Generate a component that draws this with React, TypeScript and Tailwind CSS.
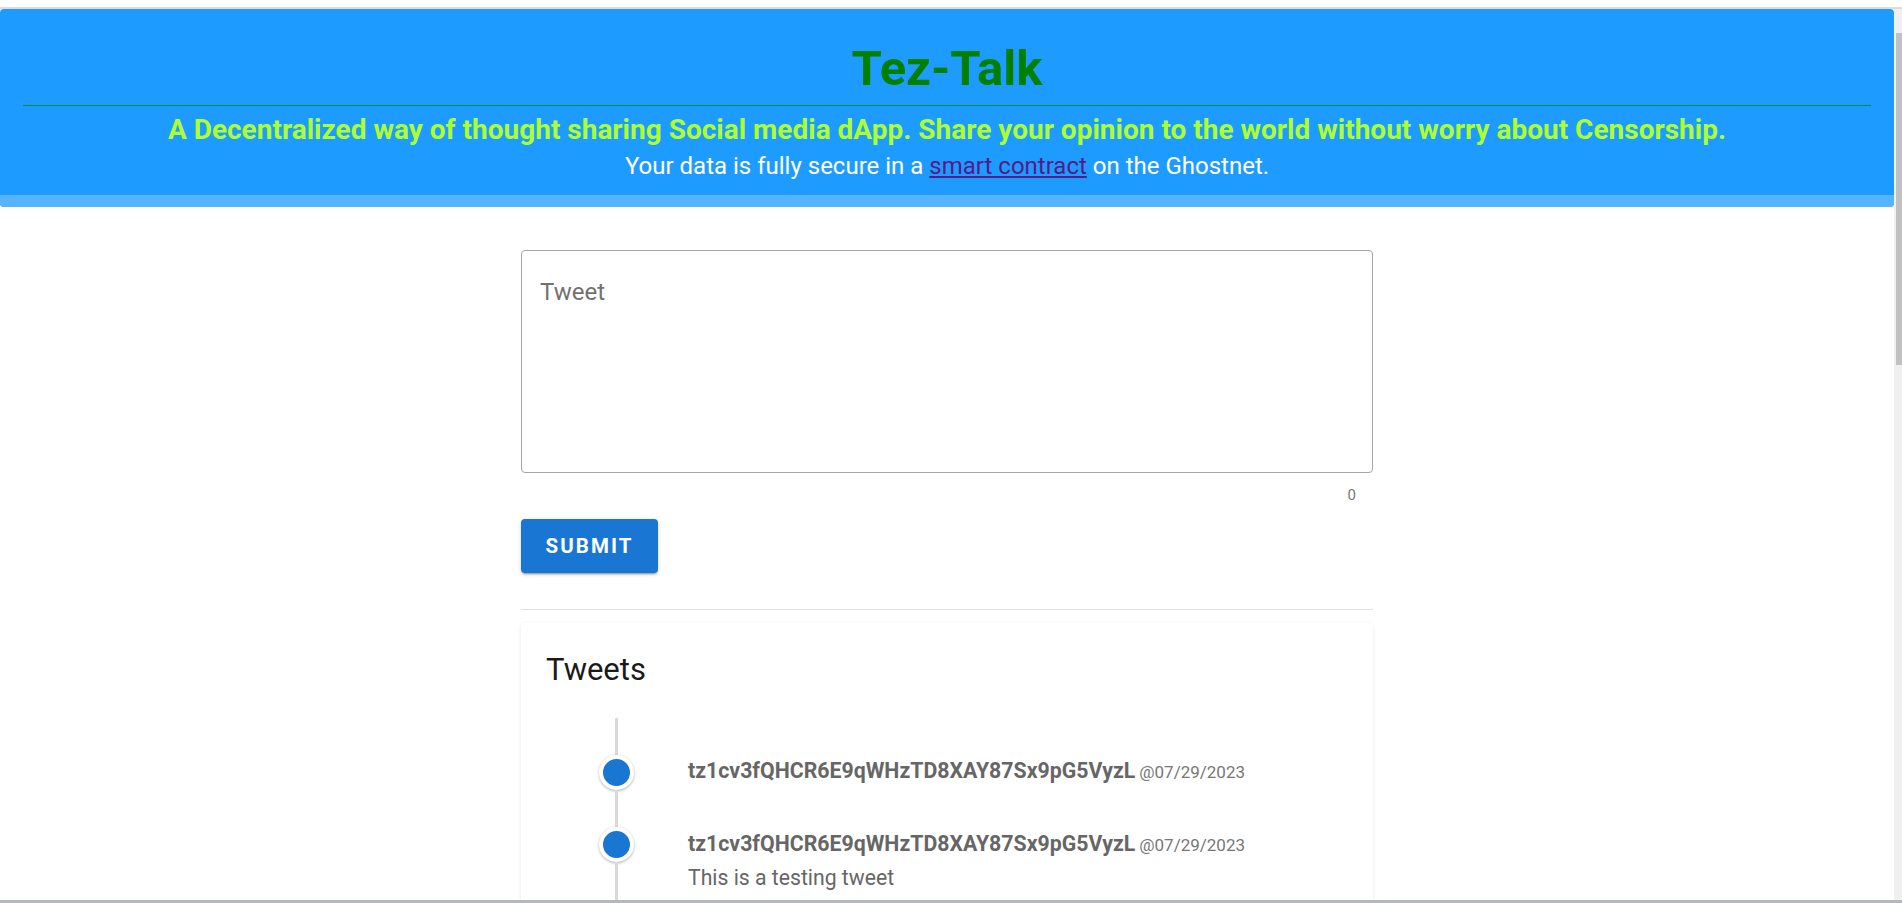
import React from "react";

const tweets = [
  { addr: "tz1cv3fQHCR6E9qWHzTD8XAY87Sx9pG5VyzL", date: "@07/29/2023", body: "" },
  { addr: "tz1cv3fQHCR6E9qWHzTD8XAY87Sx9pG5VyzL", date: "@07/29/2023", body: "This is a testing tweet" },
];

export default function App() {
  return (
    <div className="flex h-[903px] w-full flex-col overflow-hidden bg-white font-['Roboto',sans-serif]">
      <div className="flex min-h-0 flex-1">
        <div className="flex min-w-0 flex-1 flex-col">
          <div className="h-[7px] shrink-0 bg-white" />
          <div className="h-[2px] shrink-0 bg-[#dcdcdc]" />
          <header className="shrink-0 overflow-hidden rounded-[4px] bg-[#1e9bff]">
            <div className="px-[23px] pt-[35px] pb-[14px]">
              <h1 className="text-center text-[49px] font-bold leading-[49px] text-[#008000]">Tez-Talk</h1>
              <hr className="mt-[12px] border-0 border-t border-[#0a8a3a]" />
              <h3 className="mt-[7px] text-center text-[28px] font-bold leading-[34px] text-[#adff2f]">
                A Decentralized way of thought sharing Social media dApp. Share your opinion to the world without worry about Censorship.
              </h3>
              <p className="mt-[4px] text-center text-[24px] leading-[30px] text-white">
                Your data is fully secure in a{" "}
                <a href="#" className="text-[#551a8b] underline">smart contract</a> on the Ghostnet.
              </p>
            </div>
            <div className="h-[12px] bg-[#56b4ff]" />
          </header>

          <main className="mx-auto mt-[43px] flex w-[852px] flex-col">
            <div className="h-[223px] rounded-[4px] border border-[#a6a6a6] px-[18px] pt-[26px]">
              <div className="text-[24px] leading-[30px] text-[#717171]">Tweet</div>
            </div>
            <div className="mt-[12px] pr-[17px] text-right text-[15px] leading-[20px] text-[#777]">0</div>
            <button className="mt-[14px] flex h-[54px] w-[137px] items-center justify-center rounded-[4px] bg-[#1976d2] text-[20.5px] font-bold tracking-[0.1em] text-white shadow-[0_3px_1px_-2px_rgba(0,0,0,0.2),0_2px_2px_0_rgba(0,0,0,0.14),0_1px_5px_0_rgba(0,0,0,0.12)]">
              SUBMIT
            </button>
            <div className="mt-[36px] h-px bg-[#e0e0e0]" />
            <section className="mt-[13px] rounded-[4px] bg-white px-[25px] pt-[29px] pb-[40px] shadow-[0_2px_1px_-1px_rgba(0,0,0,0.12),0_1px_1px_0_rgba(0,0,0,0.08),0_1px_4px_0_rgba(0,0,0,0.08)]">
              <h2 className="text-[31px] leading-[36px] text-[#1a1a1a]">Tweets</h2>
              <div className="mt-[30px] flex flex-col pl-[53px]">
                {tweets.map((t, i) => (
                  <div key={i} className={i === 0 ? "flex min-h-[101px]" : "flex min-h-[200px]"}>
                    <div className="flex w-[35px] shrink-0 flex-col items-center">
                      <div className={i === 0 ? "h-[37px] w-[3px] bg-[#d9d9d9]" : "h-[8px] w-[3px] bg-[#d9d9d9]"} />
                      <div className="h-[35px] w-[35px] rounded-full border-[4px] border-white bg-[#1976d2] shadow-[0_1px_3px_rgba(0,0,0,0.3)]" />
                      <div className="w-[3px] flex-1 bg-[#d9d9d9]" />
                    </div>
                    <div className={i === 0 ? "pl-[54px] pt-[41px]" : "pl-[54px] pt-[13px]"}>
                      <div className="leading-[24px]">
                        <span className="text-[21.3px] font-bold text-[#666]">{t.addr}</span>{" "}
                        <span className="text-[17px] text-[#777]">{t.date}</span>
                      </div>
                      {t.body && <div className="mt-[8px] text-[21.2px] leading-[24px] text-[#666]">{t.body}</div>}
                    </div>
                  </div>
                ))}
              </div>
            </section>
          </main>
        </div>
        <div className="flex w-[8px] shrink-0 flex-col bg-[#f0f0f0]">
          <div className="h-[7px] bg-white" />
          <div className="h-[2px] bg-[#dcdcdc]" />
          <div className="h-[24px] bg-[#f0f0f0]" />
          <div className="ml-[2px] h-[332px] bg-[#c1c1c1]" />
        </div>
      </div>
      <div className="h-[3px] shrink-0 bg-[#b4b7c1]" />
    </div>
  );
}
